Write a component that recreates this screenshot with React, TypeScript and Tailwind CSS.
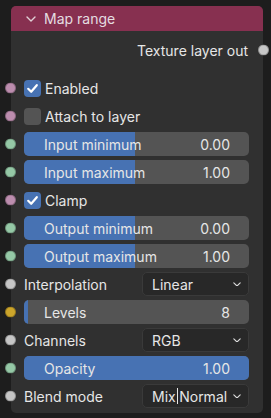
import React from "react";

const F = { fontFamily: "Inter, 'Noto Sans', sans-serif" };

function Socket({ color, side = "left" }: { color: string; side?: "left" | "right" }) {
  return (
    <span
      className={`absolute top-1/2 -translate-y-1/2 w-[11px] h-[11px] rounded-full border border-[#00000040] ${side === "left" ? "left-[-19px]" : "right-[-20px]"}`}
      style={{ backgroundColor: color }}
    />
  );
}

const PINK = "#bc8dae";
const MINT = "#95c8a6";
const GRAY = "#c6c6c6";
const GOLD = "#cca52b";

function Check({ checked, label, color }: { checked: boolean; label: string; color: string }) {
  return (
    <div className="relative h-[24px] flex items-center">
      <Socket color={color} />
      <div
        className={`w-[17px] h-[17px] rounded-[4px] flex items-center justify-center ${checked ? "bg-[#4772b3]" : "bg-[#545454]"}`}
      >
        {checked && (
          <svg width="13" height="13" viewBox="0 0 13 13">
            <path d="M2.2 6.8 L5.2 9.8 L10.8 3.2" fill="none" stroke="#ffffff" strokeWidth="2.2" strokeLinecap="round" strokeLinejoin="round" />
          </svg>
        )}
      </div>
      <span className="ml-[4px] text-[14px] text-[#e6e6e6]">{label}</span>
    </div>
  );
}

function Slider({ label, value, fill, color }: { label: string; value: string; fill: number; color: string }) {
  return (
    <div className="relative h-[24px]">
      <Socket color={color} />
      <div className="relative h-full rounded-[5px] bg-[#545454] overflow-hidden flex items-center justify-between pl-[20px] pr-[19px]">
        <div className="absolute left-0 top-0 bottom-0 bg-[#4772b3]" style={{ width: fill }} />
        <span className="relative text-[14px] text-[#e6e6e6]">{label}</span>
        <span className="relative text-[14px] text-[#e6e6e6]">{value}</span>
      </div>
    </div>
  );
}

function Chevron({ size = 9, color = "#dcdcdc" }: { size?: number; color?: string }) {
  return (
    <svg width={size} height={size * 0.6} viewBox="0 0 10 6">
      <path d="M1 1 L5 5 L9 1" fill="none" stroke={color} strokeWidth="1.4" strokeLinecap="round" strokeLinejoin="round" />
    </svg>
  );
}

function Select({ label, value, color }: { label: string; value: React.ReactNode; color: string }) {
  return (
    <div className="relative h-[24px] flex items-center">
      <Socket color={color} />
      <span className="flex-1 text-[14px] text-[#e6e6e6]">{label}</span>
      <div className="w-[107px] h-full rounded-[5px] bg-[#282828] border border-[#3a3a3a] flex items-center justify-between pl-[9px] pr-[7px]">
        <span className="text-[14px] text-[#e6e6e6] flex items-center">{value}</span>
        <Chevron size={8} />
      </div>
    </div>
  );
}

export default function App() {
  return (
    <div className="w-[271px] h-[418px] bg-[#1d1d1d] pt-[6px] pl-[11px] overflow-hidden" style={F}>
      <div className="w-[252px] h-[407px] bg-[#303030] rounded-[5px] flex flex-col">
        <div className="h-[25px] bg-[#873050] rounded-t-[5px] flex items-center pl-[15px]">
          <Chevron size={10} color="#e0d0d6" />
          <span className="ml-[8px] text-[14px] text-[#e4dde0]">Map range</span>
        </div>
        <div className="pl-[13px] pr-[14px] pt-[7px] flex flex-col">
          <div className="relative h-[24px] flex items-center justify-end">
            <span className="text-[14px] text-[#e6e6e6] mr-[1px]">Texture layer out</span>
            <Socket color={GRAY} side="right" />
          </div>
          <div className="mt-[14px] flex flex-col gap-[4px]">
            <Check checked label="Enabled" color={PINK} />
            <Check checked={false} label="Attach to layer" color={PINK} />
            <Slider label="Input minimum" value="0.00" fill={111} color={MINT} />
            <Slider label="Input maximum" value="1.00" fill={111} color={MINT} />
            <Check checked label="Clamp" color={PINK} />
            <Slider label="Output minimum" value="0.00" fill={111} color={MINT} />
            <Slider label="Output maximum" value="1.00" fill={111} color={MINT} />
            <Select label="Interpolation" value="Linear" color={GRAY} />
            <Slider label="Levels" value="8" fill={4} color={GOLD} />
            <Select label="Channels" value="RGB" color={GRAY} />
            <Slider label="Opacity" value="1.00" fill={225} color={MINT} />
            <Select
              label="Blend mode"
              value={
                <>
                  Mix<span className="inline-block w-[1.5px] h-[16px] bg-[#e6e6e6] mx-[1px]" />Normal
                </>
              }
              color={GRAY}
            />
          </div>
        </div>
      </div>
    </div>
  );
}
